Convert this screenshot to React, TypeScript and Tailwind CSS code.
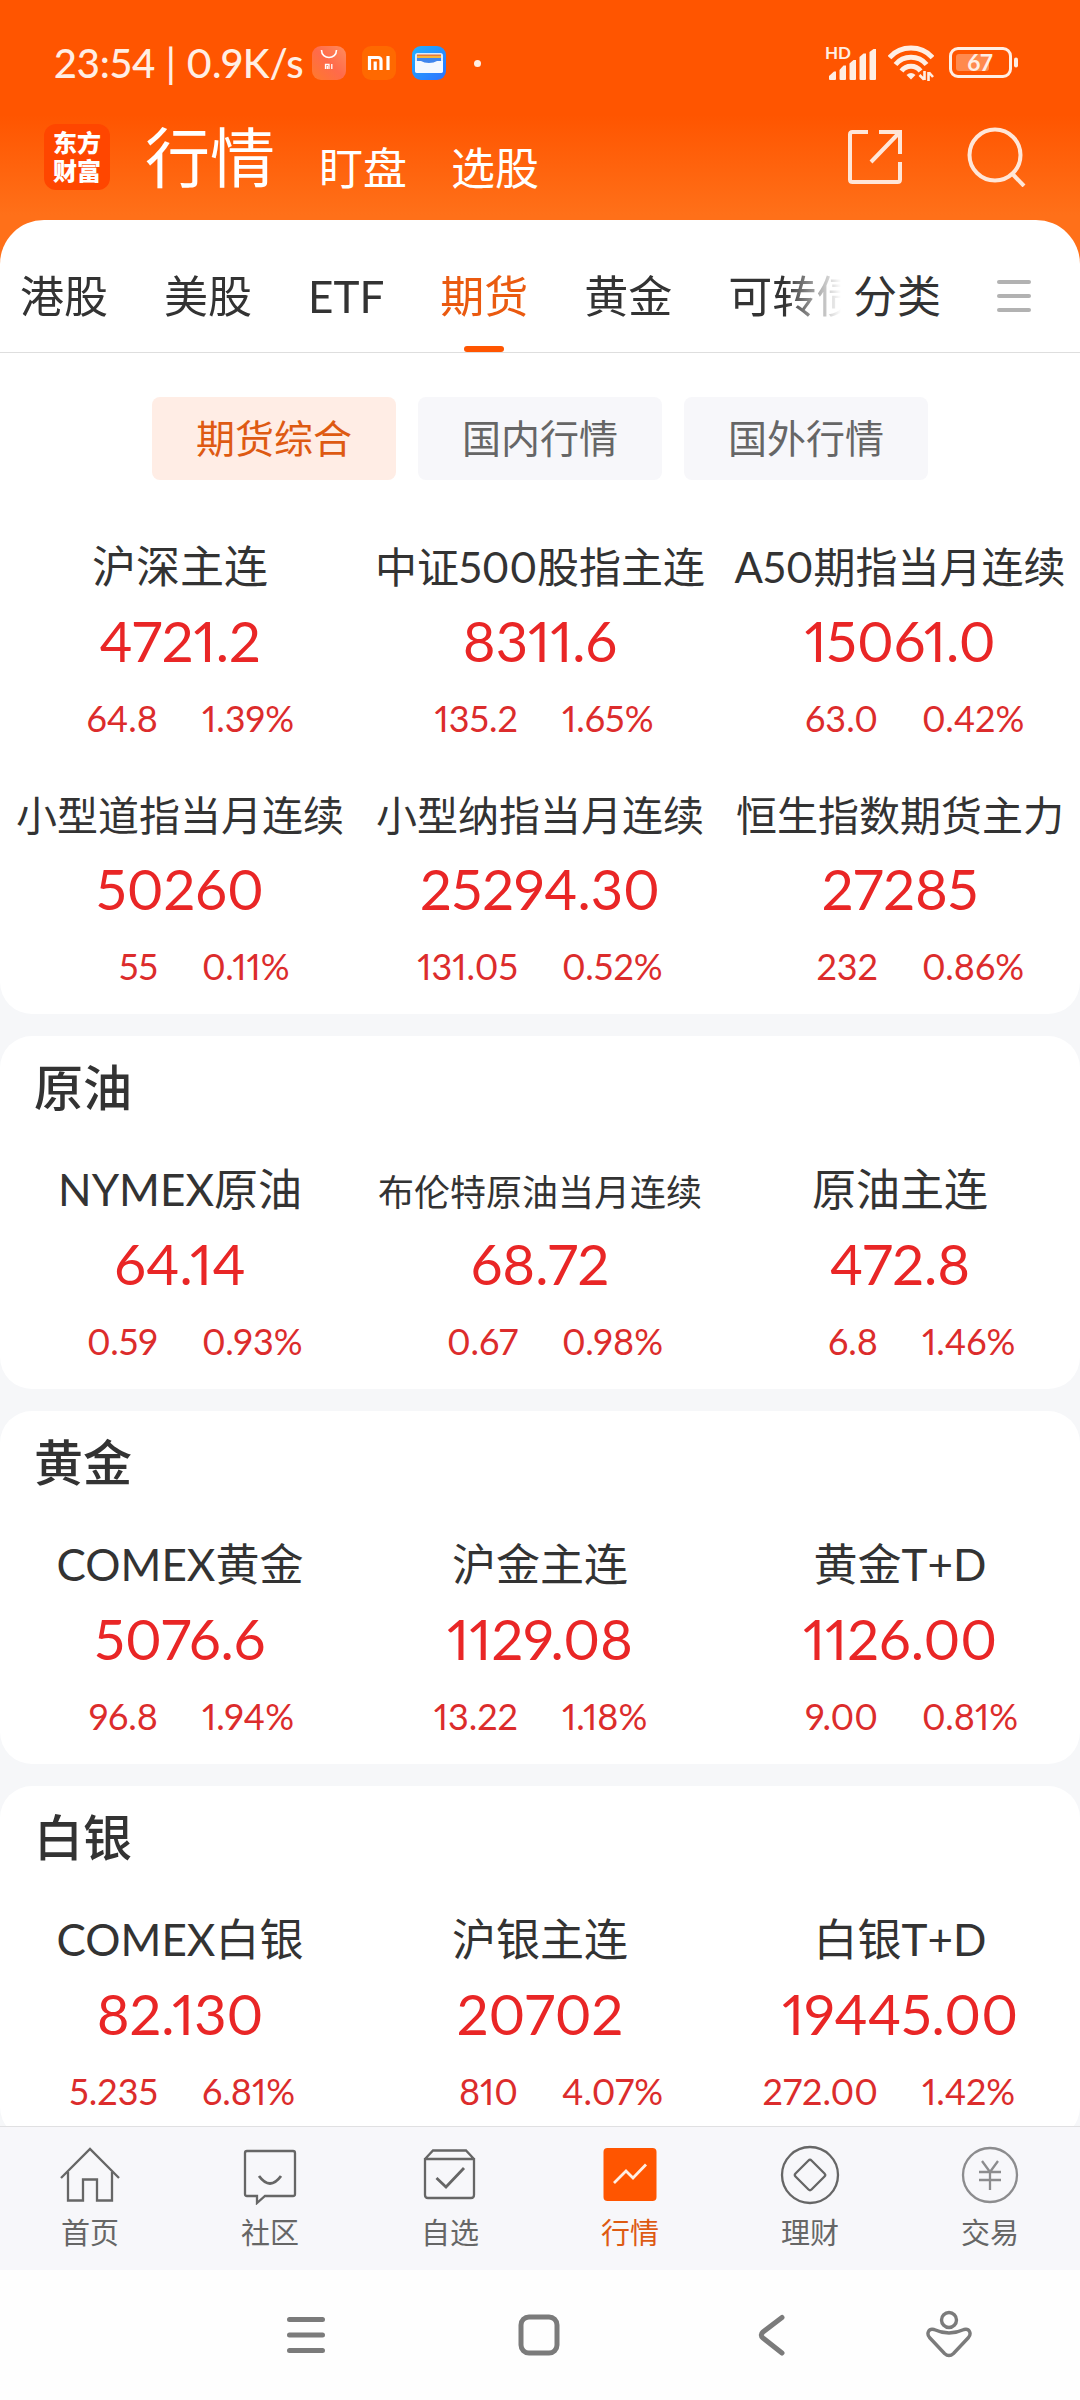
import React from "react";

type Quote = { name: string; price: string; change: string; percent: string; size?: string };
type Group = { title: string; quotes: Quote[] };

const SIZE_42 = "text-[42px]";
const SIZE_41 = "text-[41px]";
const SIZE_36 = "text-[36px]";

const indexQuotes: Quote[] = [
  { name: "沪深主连", price: "4721.2", change: "64.8", percent: "1.39%" },
  { name: "中证500股指主连", price: "8311.6", change: "135.2", percent: "1.65%", size: SIZE_42 },
  { name: "A50期指当月连续", price: "15061.0", change: "63.0", percent: "0.42%", size: SIZE_42 },
  { name: "小型道指当月连续", price: "50260", change: "55", percent: "0.11%", size: SIZE_41 },
  { name: "小型纳指当月连续", price: "25294.30", change: "131.05", percent: "0.52%", size: SIZE_41 },
  { name: "恒生指数期货主力", price: "27285", change: "232", percent: "0.86%", size: SIZE_41 },
];

const groups: Group[] = [
  {
    title: "原油",
    quotes: [
      { name: "NYMEX原油", price: "64.14", change: "0.59", percent: "0.93%" },
      { name: "布伦特原油当月连续", price: "68.72", change: "0.67", percent: "0.98%", size: SIZE_36 },
      { name: "原油主连", price: "472.8", change: "6.8", percent: "1.46%" },
    ],
  },
  {
    title: "黄金",
    quotes: [
      { name: "COMEX黄金", price: "5076.6", change: "96.8", percent: "1.94%" },
      { name: "沪金主连", price: "1129.08", change: "13.22", percent: "1.18%" },
      { name: "黄金T+D", price: "1126.00", change: "9.00", percent: "0.81%" },
    ],
  },
  {
    title: "白银",
    quotes: [
      { name: "COMEX白银", price: "82.130", change: "5.235", percent: "6.81%" },
      { name: "沪银主连", price: "20702", change: "810", percent: "4.07%" },
      { name: "白银T+D", price: "19445.00", change: "272.00", percent: "1.42%" },
    ],
  },
];

function StatusBar() {
  return (
    <div className="flex h-[86px] items-end justify-between pr-[61px] pl-[54px] text-[#ffeee4]">
      <div className="flex h-[46px] items-center">
        <span className="text-[40px] leading-[46px] font-medium whitespace-nowrap">23:54 | 0.9K/s</span>
        <svg className="ml-2 h-[34px] w-[34px]" viewBox="0 0 34 34" aria-hidden="true">
          <defs>
            <linearGradient id="store" x1="0" y1="1" x2="1" y2="0">
              <stop offset="0" stopColor="#ff7a2c" />
              <stop offset="0.5" stopColor="#ff6a4a" />
              <stop offset="1" stopColor="#ff8c5c" />
            </linearGradient>
          </defs>
          <rect width="34" height="34" rx="9" fill="url(#store)" />
          <path d="M9.500 4c0 10 15 10 15 0" fill="none" stroke="#fff" strokeWidth="1.600" />
          <path d="M13.500 23v-4.500h3.500v4.500M15.300 20v3M19.800 18v5" fill="none" stroke="#fff" strokeWidth="1.300" />
        </svg>
        <svg className="ml-4 h-[34px] w-[34px]" viewBox="0 0 34 34" aria-hidden="true">
          <rect width="34" height="34" rx="9" fill="#ff6900" />
          <path d="M7.500 24V11.500h8.500q3 0 3 3V24M13.200 15.500V24M26 10v14" fill="none" stroke="#fff" strokeWidth="3.200" />
        </svg>
        <svg className="ml-4 h-[34px] w-[34px]" viewBox="0 0 34 34" aria-hidden="true">
          <defs>
            <linearGradient id="wallet" x1="0" y1="0" x2="1" y2="1">
              <stop offset="0" stopColor="#22b0ff" />
              <stop offset="1" stopColor="#2c72ff" />
            </linearGradient>
          </defs>
          <rect width="34" height="34" rx="9" fill="url(#wallet)" />
          <rect x="3" y="7" width="28" height="20" rx="2.500" fill="#dfe9f8" />
          <path d="M5 8.500h24v2H5z" fill="#e8793c" />
          <path d="M5 10h24v2H5z" fill="#f5b63c" />
          <path d="M5 12h24v5H5z" fill="#3f86ee" />
          <path d="M3 15h6q3 2 8 2t8-2h6v9.500q0 2.500-2.500 2.500h-23Q3 27 3 24.500z" fill="#f3f8ff" />
        </svg>
        <span className="ml-7 h-[7px] w-[7px] rounded-full bg-[#ffeee4]" />
      </div>
      <div className="flex h-[46px] items-center">
        <svg className="h-10 w-[52px]" viewBox="0 -4 52 40" fill="#ffeee4" aria-hidden="true">
          <text x="1" y="12" fontSize="17" fontWeight="700" fontFamily="Lato, sans-serif">HD</text>
          <path d="M5 32v-3l5-4.500h2V32q0 1-1 1H6q-1 0-1-1z" />
          <path d="M15.500 32V23l4-4.500H22V32q0 1-1 1h-4.500q-1 0-1-1z" />
          <path d="M25.500 32V16.500l4-3.500H32v19q0 1-1 1h-4.500q-1 0-1-1z" />
          <path d="M35.500 32V10l4-3.500H42V32q0 1-1 1h-4.500q-1 0-1-1z" />
          <path d="M45.500 32V5l4-3H52v30q0 1-1 1h-4.500q-1 0-1-1z" />
        </svg>
        <svg className="ml-3 h-9 w-[46px]" viewBox="0 0 46 36" fill="none" stroke="#ffeee4" strokeWidth="5" aria-hidden="true">
          <path d="M1.500 12.500Q10 3 23 3T44.500 12.500" />
          <path d="M7.500 19.500Q13.500 12.300 23 12.300T38.500 19.500" />
          <path d="M13.500 26Q17 21.300 23 21.300T32.500 26" />
          <path d="M18.500 30q4.500-4 9 0L23 34.500z" fill="#ffeee4" stroke="none" />
          <path d="M36.500 26v9M36 34.500 31.500 30M40.500 36v-9M41 27.500l4 4.500" strokeWidth="2.600" />
        </svg>
        <svg className="ml-[15px] h-8 w-[70px]" viewBox="0 0 70 32" aria-hidden="true">
          <rect x="1.500" y="1.500" width="60" height="28" rx="7.500" fill="none" stroke="#ffeee4" strokeWidth="3" />
          <rect x="7" y="7" width="33" height="17" rx="3" fill="#ff8a4e" />
          <rect x="65" y="10.500" width="4" height="10" rx="2" fill="#ffeee4" />
          <text x="31" y="24" textAnchor="middle" fontSize="23" fontWeight="700" fontFamily="Lato, sans-serif" fill="#ffeee4">67</text>
        </svg>
      </div>
    </div>
  );
}

function Header() {
  return (
    <div className="flex h-[134px] items-center pt-2 pr-[53px] pl-11 text-white">
      <a href="#home" className="flex h-[66px] w-[66px] shrink-0 flex-col items-center justify-center rounded-xl bg-[#ff4600] text-[24px] leading-[28px] font-black">
        <span>东方</span>
        <span>财富</span>
      </a>
      <nav className="ml-[35px] flex items-end">
        <button className="text-[65px] leading-[90px]">行情</button>
        <button className="ml-11 text-[44px] leading-[68px]">盯盘</button>
        <button className="ml-11 text-[44px] leading-[68px]">选股</button>
      </nav>
      <div className="ml-auto flex items-center gap-16">
        <button aria-label="分享">
          <svg className="block h-[56px] w-[56px]" viewBox="0 0 56 56" fill="none" stroke="#ffe6d8" strokeWidth="4" aria-hidden="true">
            <path d="M21 3H5.500Q3 3 3 5.500v45Q3 53 5.500 53h45q2.500 0 2.500-2.500V33" />
            <path d="M32 3h21v22M51 5 24 33" />
          </svg>
        </button>
        <button aria-label="搜索">
          <svg className="block h-[60px] w-[60px]" viewBox="0 0 60 60" fill="none" stroke="#ffe6d8" strokeWidth="4" aria-hidden="true">
            <circle cx="28" cy="28" r="25.500" />
            <path d="M45.500 47 57 59" />
          </svg>
        </button>
      </div>
    </div>
  );
}

function MarketTabs() {
  const tabs = ["港股", "美股", "ETF", "期货", "黄金", "可转债"];
  return (
    <div className="flex h-[133px] items-stretch rounded-t-[44px] border-b border-[#dedede] bg-white text-[44px] text-[#333]">
      <div className="flex min-w-0 flex-1 gap-14 overflow-hidden pl-5 [mask-image:linear-gradient(to_right,black_calc(100%-56px),transparent)]">
        {tabs.map((tab) => (
          <button
            key={tab}
            className={
              tab === "期货"
                ? "relative shrink-0 pt-5 text-[#ea5a10] after:absolute after:bottom-0 after:left-1/2 after:h-1.5 after:w-10 after:-translate-x-1/2 after:rounded-sm after:bg-[#ff5500]"
                : "shrink-0 pt-5"
            }
          >
            {tab}
          </button>
        ))}
      </div>
      <div className="flex items-center gap-14 pt-5 pr-[49px] pl-3">
        <button>分类</button>
        <button aria-label="菜单" className="flex flex-col gap-[10px]">
          <span className="h-1 w-[34px] rounded-full bg-[#b2b2b2]" />
          <span className="h-1 w-[34px] rounded-full bg-[#b2b2b2]" />
          <span className="h-1 w-[34px] rounded-full bg-[#b2b2b2]" />
        </button>
      </div>
    </div>
  );
}

function QuoteCell({ quote }: { quote: Quote }) {
  return (
    <a href="#quote" className="flex min-w-0 flex-col text-center">
      <span className="h-[60px] text-[44px] leading-[60px] whitespace-nowrap text-[#333]">
        <span className={quote.size}>{quote.name}</span>
      </span>
      <span className="text-[56px] leading-[90px] text-[#e92626]">{quote.price}</span>
      <span className="grid grid-cols-2 gap-11 text-[36px] leading-[64px] text-[#dc2c2c]">
        <span className="text-right">{quote.change}</span>
        <span className="text-left">{quote.percent}</span>
      </span>
    </a>
  );
}

function QuoteGrid({ quotes }: { quotes: Quote[] }) {
  return (
    <div className="grid grid-cols-3 gap-y-[34px]">
      {quotes.map((quote) => (
        <QuoteCell key={quote.name} quote={quote} />
      ))}
    </div>
  );
}

function FilterPills() {
  const pill = "h-[83px] w-[244px] rounded-lg text-[39px]";
  return (
    <div className="flex justify-center gap-[22px] pt-11 pb-14">
      <button className={`${pill} bg-[#ffede5] text-[#de5a12]`}>期货综合</button>
      <button className={`${pill} bg-[#f7f7fa] text-[#666]`}>国内行情</button>
      <button className={`${pill} bg-[#f7f7fa] text-[#666]`}>国外行情</button>
    </div>
  );
}

function TabItem({ label, active, children }: { label: string; active?: boolean; children: React.ReactNode }) {
  return (
    <button className={`flex flex-1 flex-col items-center pt-[18px] ${active ? "text-[#de5a12]" : "text-[#666]"}`}>
      <svg className="h-[60px] w-[60px]" viewBox="0 0 60 60" fill="none" stroke="currentColor" strokeWidth="2.300" aria-hidden="true">
        {children}
      </svg>
      <span className="mt-2 text-[29px] leading-10">{label}</span>
    </button>
  );
}

function BottomTabs() {
  return (
    <nav className="flex h-36 shrink-0 border-t border-[#e0e0e2] bg-[#f7f7fa]">
      <TabItem label="首页">
        <path d="M1 33 30 4l29 29M8 27v28.500h15V34.500h14v21h15V27" />
      </TabItem>
      <TabItem label="社区">
        <path d="M7 6h46q2 0 2 2v41q0 2-2 2H25l-8 7v-7H7q-2 0-2-2V8q0-2 2-2z" />
        <path d="M19 31q11 15 22 0" strokeWidth="2.800" />
      </TabItem>
      <TabItem label="自选">
        <path d="M5 13v37q0 3 3 3h43q3 0 3-3V13M5 14h49M5 14l8-8.500h33L54 14" />
        <path d="M16.500 33 26 42l18-19" strokeWidth="2.800" />
      </TabItem>
      <TabItem label="行情" active>
        <rect x="3.500" y="3" width="53" height="53" rx="4" fill="#ff5500" stroke="none" />
        <path d="m14 38 12-12 7 7 13-13.500" stroke="#ffeee4" strokeWidth="2.800" />
      </TabItem>
      <TabItem label="理财">
        <circle cx="30" cy="30" r="28" />
        <path d="M28.500 15.500q1.500-1.500 3 0l13 13q1.500 1.500 0 3l-13 13q-1.500 1.500-3 0l-13-13q-1.500-1.500 0-3z" />
      </TabItem>
      <TabItem label="交易">
        <g stroke="#8c8c8e">
          <circle cx="30" cy="30" r="27" />
          <path d="M22 16l8 11 8-11M19 27h22M19 35h22M30 27v18" />
        </g>
      </TabItem>
    </nav>
  );
}

function SystemNav() {
  return (
    <div className="flex h-[130px] shrink-0 items-center bg-[#fefefe] pr-[107px] pl-[283px]">
      <div className="flex flex-1 items-center justify-between">
        {[
          ["最近任务", <path key="p" d="M6.500 7.500h33M6.500 23h33M6.500 38.500h33" />],
          ["主屏幕", <rect key="p" x="5" y="5" width="36" height="36" rx="8" />],
          ["返回", <path key="p" d="M33 5.500 14 20q-3.500 3 0 6L33 41" />],
        ].map(([label, shape]) => (
          <button key={label as string} aria-label={label as string}>
            <svg className="block h-[46px] w-[46px]" viewBox="0 0 46 46" fill="none" stroke="#7b7b7b" strokeWidth="5" strokeLinecap="round" aria-hidden="true">
              {shape}
            </svg>
          </button>
        ))}
      </div>
      <button aria-label="无障碍" className="ml-[130px]">
        <svg className="block h-[50px] w-[48px]" viewBox="0 0 48 50" fill="none" stroke="#7b7b7b" strokeWidth="3.400" aria-hidden="true">
          <circle cx="24" cy="10" r="7.500" />
          <path d="M9 19.500Q24 26.500 39 19.500q4-1 5.500 2t-1 6L28.500 43.500q-4.500 4-9 0L4.500 27.500q-2.500-3-1-6T9 19.500z" />
        </svg>
      </button>
    </div>
  );
}

export default function App() {
  return (
    <div className="flex h-screen flex-col overflow-hidden bg-[#f6f7f9] font-['Lato','Noto_Sans_CJK_SC',sans-serif] proportional-nums">
      <header className="shrink-0 bg-[linear-gradient(#ff5500_0px,#ff5500_115px,#ff7019_215px,#ff7019_264px)]">
        <StatusBar />
        <Header />
        <MarketTabs />
      </header>
      <main className="min-h-0 flex-1 overflow-hidden">
        <section className="rounded-b-[32px] bg-white pb-4">
          <FilterPills />
          <QuoteGrid quotes={indexQuotes} />
        </section>
        {groups.map((group) => (
          <section key={group.title} className="mt-[22px] rounded-[32px] bg-white pb-4">
            <h2 className="px-[34px] pt-4 pb-[37px] text-[49px] leading-[70px] font-medium text-[#333]">{group.title}</h2>
            <QuoteGrid quotes={group.quotes} />
          </section>
        ))}
      </main>
      <BottomTabs />
      <SystemNav />
    </div>
  );
}
